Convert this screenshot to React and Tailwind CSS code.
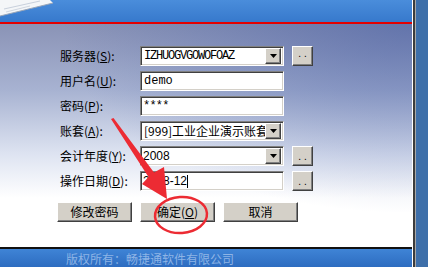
const cjk = "font-['Noto_Sans_CJK_SC',sans-serif]"
const sunken =
  'h-[20px] bg-white border border-t-[#808080] border-l-[#808080] border-b-white border-r-white shadow-[inset_1px_1px_0_#404040,inset_-1px_-1px_0_#d4d0c8] flex items-center overflow-hidden'
const raised =
  'bg-[#d4d0c8] border border-t-white border-l-white border-b-[#404040] border-r-[#404040] shadow-[inset_-1px_-1px_0_#808080]'

function Label({ text, k }) {
  return (
    <div className={`w-[80px] text-[12px] leading-[20px] text-black ${cjk}`}>
      {text}(<span className="underline">{k}</span>):
    </div>
  )
}

function DropBtn() {
  return (
    <div className={`ml-auto mr-[2px] w-[16px] h-[16px] shrink-0 flex items-center justify-center ${raised}`}>
      <svg width="7" height="4" viewBox="0 0 7 4">
        <polygon points="0,0 7,0 3.5,4" fill="#000" />
      </svg>
    </div>
  )
}

function DotBtn({ top }) {
  return (
    <div
      className={`ml-[8px] w-[21px] h-[20px] flex justify-center text-[10px] leading-[10px] text-black font-['Liberation_Sans',sans-serif] ${raised} ${top ? 'items-start pt-[2px]' : 'items-end pb-[3px]'}`}
    >
      . .
    </div>
  )
}

function Row({ children }) {
  return <div className="flex items-center h-[20px]">{children}</div>
}

function Button({ children }) {
  return (
    <div className={`w-[75px] h-[20px] flex items-center justify-center text-[12px] text-black ${cjk} ${raised}`}>
      {children}
    </div>
  )
}

export default function App() {
  return (
    <div className="relative w-[428px] h-[267px] overflow-hidden flex bg-white">
      <div className="w-[412px] h-full flex flex-col">
        {/* top banner */}
        <div className="relative h-[22px] bg-[linear-gradient(to_bottom,#4a8ddb,#3779cc)] overflow-hidden">
          <svg className="absolute left-0 top-0" width="60" height="22" viewBox="0 0 60 22">
            <polygon points="0,0 50,0 53,3 0,16" fill="#f4f6f8" />
            <polyline points="0,16 53,3" stroke="#9aa6b8" strokeWidth="1" fill="none" />
            <line x1="4" y1="9" x2="40" y2="1" stroke="#c8d0dc" strokeWidth="1" />
            <line x1="6" y1="12" x2="30" y2="6" stroke="#d0d6e0" strokeWidth="1" />
          </svg>
        </div>
        <div className="h-[2px] bg-[#e30000]" />

        {/* main panel */}
        <div className="flex-1 pt-[22px] pl-[60px] flex flex-col gap-[5px] bg-[radial-gradient(ellipse_at_top_right,rgba(60,85,160,0.5),transparent_60%),linear-gradient(to_bottom,#8a93b6,#a8b3d2_30%,#dde3f1_58%,#ffffff_78%)]">
          <Row>
            <Label text="服务器" k="S" />
            <div className={`w-[144px] ${sunken}`}>
              <span className="pl-[3px] text-[12px] tracking-[-1.2px] text-black font-['Liberation_Mono',monospace]">IZHUOGVGOWOFOAZ</span>
              <DropBtn />
            </div>
            <DotBtn top />
          </Row>
          <Row>
            <Label text="用户名" k="U" />
            <div className={`w-[144px] ${sunken}`}>
              <span className="pl-[3px] text-[12px] text-black font-['Liberation_Mono',monospace]">demo</span>
            </div>
          </Row>
          <Row>
            <Label text="密码" k="P" />
            <div className={`w-[144px] ${sunken}`}>
              <span className="pl-[2px] text-[12px] tracking-[-0.8px] text-black font-['Liberation_Mono',monospace]">****</span>
            </div>
          </Row>
          <Row>
            <Label text="账套" k="A" />
            <div className={`w-[144px] ${sunken}`}>
              <span className={`pl-[3px] whitespace-nowrap overflow-hidden text-[12px] text-black ${cjk}`}>[999]工业企业演示账套</span>
              <DropBtn />
            </div>
          </Row>
          <Row>
            <Label text="会计年度" k="Y" />
            <div className={`w-[144px] ${sunken}`}>
              <span className="pl-[2px] text-[12px] text-black font-['Liberation_Sans',sans-serif]">2008</span>
              <DropBtn />
            </div>
            <DotBtn />
          </Row>
          <Row>
            <Label text="操作日期" k="D" />
            <div className={`w-[144px] ${sunken}`}>
              <span className="pl-[2px] text-[12px] text-black font-['Liberation_Sans',sans-serif]">2008-12</span>
              <span className="w-px h-[13px] bg-black" />
            </div>
            <DotBtn />
          </Row>
          <div className="flex gap-[8px] mt-[6px] -ml-[3px]">
            <Button>修改密码</Button>
            <Button>
              确定(<span className="underline">O</span>)
            </Button>
            <Button>取消</Button>
          </div>
        </div>

        <div className="h-[2px] bg-[#111]" />
        {/* footer */}
        <div className="h-[18px] pl-[66px] pt-[3px] bg-[linear-gradient(to_bottom,#3f84d6,#2d6cc0)]">
          <div className={`text-[12px] leading-[14px] text-[#8db4e6] ${cjk}`}>版权所有：畅捷通软件有限公司</div>
        </div>
      </div>

      {/* right window edge */}
      <div className="w-px bg-white" />
      <div className="w-[2px] bg-[#3c3c3c]" />
      <div className="w-px bg-[#a8a8a8]" />
      <div className="flex-1 bg-[#3e6fa9]" />

      {/* red annotation */}
      <svg className="absolute left-0 top-0 pointer-events-none" width="428" height="267" viewBox="0 0 428 267">
        <polygon
          points="111,119 148.5,177 142,184 167,199 164,167 154,172.5 113.5,118"
          fill="#ec2b33"
        />
        <ellipse
          cx="181"
          cy="215"
          rx="26"
          ry="18"
          transform="rotate(-4 181 215)"
          fill="none"
          stroke="#ec2b33"
          strokeWidth="2.5"
        />
      </svg>
    </div>
  )
}
